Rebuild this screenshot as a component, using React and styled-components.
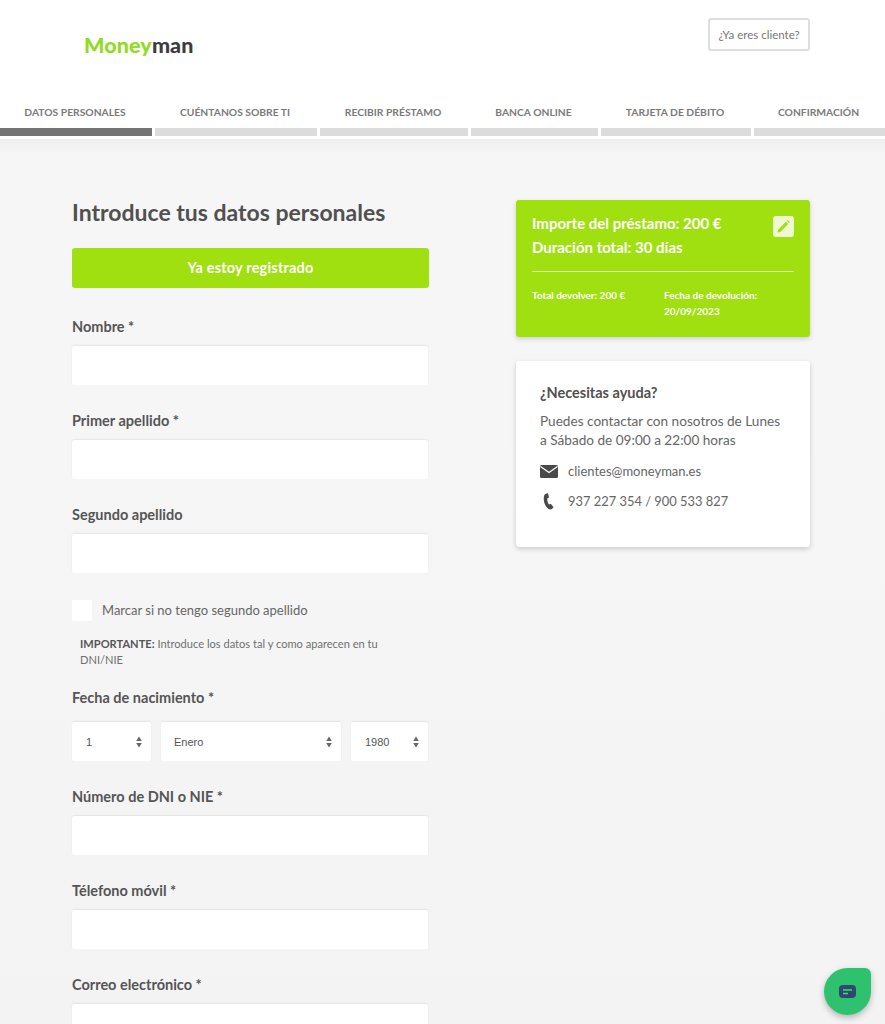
import React from "react";
import styled, { createGlobalStyle } from "styled-components";

const Global = createGlobalStyle`
  html, body {
    margin: 0;
    height: 100%;
    overflow: hidden;
    background: #f4f4f4;
    font-family: "Lato", "Open Sans", sans-serif;
    color: #555;
  }
  * { box-sizing: border-box; }
`;

const Header = styled.header`
  height: 100px;
  background: #fff;
  display: flex;
  justify-content: space-between;
  padding: 18px 75px 0 84px;
`;
const Logo = styled.div`
  margin-top: 15px;
  font-size: 21.5px;
  line-height: 25px;
  font-weight: 900;
  letter-spacing: 0.1px;
  color: #92dc1e;
  span {
    color: #3d3d3d;
  }
`;
const ClientButton = styled.button`
  width: 102px;
  height: 33px;
  background: #fff;
  border: 2px solid #dedede;
  border-radius: 3px;
  font: 400 11.5px "Lato", sans-serif;
  color: #777;
  padding: 0;
`;

const Steps = styled.nav`
  display: flex;
  gap: 3px;
  height: 39px;
  background: #fff;
`;
const Step = styled.div`
  width: ${(p) => p.$w}px;
  display: flex;
  flex-direction: column;
  justify-content: space-between;
  text-align: center;
  font-size: 10.3px;
  line-height: 25px;
  font-weight: 700;
  color: #7a7a7a;
  white-space: nowrap;
  padding: 0 2px 3px 0;
  &::after {
    content: "";
    height: 8px;
    margin-right: -2px;
    background: ${(p) => (p.$active ? "#747474" : "#dcdcdc")};
  }
`;

const Page = styled.main`
  display: flex;
  align-items: flex-start;
  padding: 61px 0 0 72px;
  background: linear-gradient(#efefef, #f6f6f6 14px, #f6f6f6 300px, #f3f3f3);
  height: 900px;
`;
const Form = styled.section`
  width: 357px;
  margin-right: 87px;
`;
const Title = styled.h1`
  margin: 0 0 24px;
  font-size: 23px;
  line-height: 24px;
  font-weight: 700;
  color: #505050;
`;
const GreenButton = styled.button`
  display: block;
  width: 100%;
  height: 40px;
  background: #a0e011;
  border: 0;
  border-radius: 3px;
  color: #fff;
  font: 700 14.5px "Lato", sans-serif;
  letter-spacing: 0.2px;
  padding: 0 0 1px;
`;
const Field = styled.div`
  margin-top: ${(p) => p.$top ?? 25}px;
`;
const Label = styled.label`
  display: block;
  padding-top: 1px;
  font-size: 14.5px;
  line-height: 26px;
  font-weight: 700;
  color: #555;
  margin-bottom: 6px;
`;
const Input = styled.div`
  width: 356px;
  height: 39px;
  background: #fff;
  border-radius: 2px;
  box-shadow: 0 -1px 2px rgba(0, 0, 0, 0.07);
`;
const CheckRow = styled.div`
  display: flex;
  align-items: center;
  gap: 10px;
  margin-top: 27px;
  font-size: 13px;
  color: #666;
`;
const CheckBox = styled.span`
  width: 20px;
  height: 21px;
  background: #fff;
  border-radius: 2px;
`;
const CheckText = styled.span`
  padding-bottom: 2px;
`;
const Notice = styled.p`
  margin: 15px 30px 0 8px;
  font-size: 11.1px;
  line-height: 16px;
  color: #6f6f6f;
  b {
    color: #555;
    font-weight: 700;
  }
`;
const DateRow = styled.div`
  display: flex;
  gap: 10px;
  width: 356px;
  padding-top: 5px;
`;
const Select = styled.div`
  flex: ${(p) => p.$grow};
  height: 39px;
  display: flex;
  align-items: center;
  justify-content: space-between;
  padding: 0 9px 0 ${(p) => p.$pad}px;
  background: #fff;
  border-radius: 2px;
  box-shadow: 0 -1px 2px rgba(0, 0, 0, 0.07);
  font: 400 11px "Liberation Sans", sans-serif;
  color: #555;
`;

const Side = styled.aside`
  width: 294px;
  display: flex;
  flex-direction: column;
  gap: 24px;
`;
const LoanCard = styled.section`
  height: 137px;
  padding: 11px 16px 0;
  background: #a0e011;
  border-radius: 3px;
  box-shadow: 0 2px 5px rgba(0, 0, 0, 0.16);
  color: #fff;
`;
const LoanTop = styled.div`
  display: flex;
  justify-content: space-between;
  height: 61px;
  border-bottom: 1px solid rgba(255, 255, 255, 0.65);
  font-size: 15px;
  line-height: 24px;
  font-weight: 700;
`;
const EditIcon = styled.span`
  width: 21px;
  height: 21px;
  margin-top: 5px;
  display: flex;
  align-items: center;
  justify-content: center;
  background: #eef9d2;
  border-radius: 3px;
`;
const LoanBottom = styled.div`
  display: grid;
  grid-template-columns: 132px 1fr;
  margin-top: 15px;
  font-size: 10px;
  line-height: 16px;
  font-weight: 700;
`;
const HelpCard = styled.section`
  height: 186px;
  padding: 22px 24px 0;
  background: #fff;
  border-radius: 3px;
  box-shadow: 0 2px 5px rgba(0, 0, 0, 0.18);
`;
const HelpTitle = styled.h2`
  margin: 0 0 9px;
  font-size: 14.5px;
  line-height: 20px;
  font-weight: 700;
  color: #505050;
`;
const HelpText = styled.p`
  margin: 0 0 6px;
  font-size: 13.6px;
  line-height: 19px;
  color: #666;
`;
const Contact = styled.div`
  display: flex;
  align-items: center;
  gap: 10px;
  height: 30px;
  font-size: ${(p) => p.$size}px;
  color: #666;
`;
const IconSlot = styled.span`
  width: 18px;
  display: flex;
  justify-content: center;
`;
const ChatBubble = styled.div`
  position: fixed;
  right: 14px;
  bottom: 9px;
  width: 47px;
  height: 47px;
  display: flex;
  align-items: center;
  justify-content: center;
  background: #2fc26e;
  border-radius: 50% 6px 50% 50%;
  box-shadow: 0 3px 6px rgba(0, 0, 0, 0.25);
`;

const steps = [
  ["DATOS PERSONALES", 152, true],
  ["CUÉNTANOS SOBRE TI", 162],
  ["RECIBIR PRÉSTAMO", 148],
  ["BANCA ONLINE", 127],
  ["TARJETA DE DÉBITO", 150],
  ["CONFIRMACIÓN", 131],
];

const Arrows = () => (
  <svg width="6" height="12" viewBox="0 0 6 12" fill="#666">
    <path d="M3 .5 5.800 5H.2zM3 11.500.2 7h5.600z" />
  </svg>
);

const TextField = ({ label, top }) => (
  <Field $top={top}>
    <Label>{label}</Label>
    <Input />
  </Field>
);

export default function App() {
  return (
    <>
      <Global />
      <Header>
        <Logo>
          Money<span>man</span>
        </Logo>
        <ClientButton>¿Ya eres cliente?</ClientButton>
      </Header>
      <Steps>
        {steps.map(([text, w, active]) => (
          <Step key={text} $w={w} $active={active}>
            {text}
          </Step>
        ))}
      </Steps>
      <Page>
        <Form>
          <Title>Introduce tus datos personales</Title>
          <GreenButton>Ya estoy registrado</GreenButton>
          <TextField label="Nombre *" top={25} />
          <TextField label="Primer apellido *" top={22} />
          <TextField label="Segundo apellido" top={22} />
          <CheckRow>
            <CheckBox />
            <CheckText>Marcar si no tengo segundo apellido</CheckText>
          </CheckRow>
          <Notice>
            <b>IMPORTANTE:</b> Introduce los datos tal y como aparecen en tu DNI/NIE
          </Notice>
          <Field $top={16}>
            <Label>Fecha de nacimiento *</Label>
            <DateRow>
              <Select $grow="0 0 79px" $pad={14}>
                1 <Arrows />
              </Select>
              <Select $grow="1" $pad={13}>
                Enero <Arrows />
              </Select>
              <Select $grow="0 0 77px" $pad={14}>
                1980 <Arrows />
              </Select>
            </DateRow>
          </Field>
          <TextField label="Número de DNI o NIE *" top={22} />
          <TextField label="Télefono móvil *" top={22} />
          <TextField label="Correo electrónico *" top={22} />
        </Form>
        <Side>
          <LoanCard>
            <LoanTop>
              <div>
                Importe del préstamo: 200 €
                <br />
                Duración total: 30 días
              </div>
              <EditIcon>
                <svg width="15" height="15" viewBox="0 0 15 15" fill="#a0e011">
                  <path d="M1.500 13.500l.6-2.800 7.900-7.900 2.200 2.200-7.900 7.900zM10.900 1.900l.9-.8 2.100 2.100-.9.9z" />
                </svg>
              </EditIcon>
            </LoanTop>
            <LoanBottom>
              <div>Total devolver: 200 €</div>
              <div>
                Fecha de devolución:
                <br />
                20/09/2023
              </div>
            </LoanBottom>
          </LoanCard>
          <HelpCard>
            <HelpTitle>¿Necesitas ayuda?</HelpTitle>
            <HelpText>
              Puedes contactar con nosotros de Lunes a Sábado de 09:00 a 22:00 horas
            </HelpText>
            <Contact $size={13}>
              <IconSlot>
                <svg width="18" height="13" viewBox="0 0 18 13">
                  <rect width="18" height="13" rx="1.500" fill="#4a4a4a" />
                  <path d="M.5 1.500 9 7.500l8.500-6" fill="none" stroke="#fff" strokeWidth="1.200" />
                </svg>
              </IconSlot>
              clientes@moneyman.es
            </Contact>
            <Contact $size={12.9}>
              <IconSlot>
                <svg width="12" height="17" viewBox="0 0 12 17" fill="#4a4a4a">
                  <path d="M3.200.5 5 .2l1 4.300-1.700.9c-.2 2 .4 4.300 1.700 6l1.700-.6 2.900 3.500-1.400 1.500C7.500 17 5.800 16.400 4.400 15 1.200 11.800.2 6.500 1 3.200 1.300 1.800 2 .9 3.200.5z" />
                </svg>
              </IconSlot>
              937 227 354 / 900 533 827
            </Contact>
          </HelpCard>
        </Side>
      </Page>
      <ChatBubble>
        <svg width="17" height="14" viewBox="0 0 17 14">
          <rect width="17" height="13" rx="4" fill="#2c4a6b" />
          <path d="M4 5h9M4 8.500h5" stroke="#4fd08f" strokeWidth="1.300" />
        </svg>
      </ChatBubble>
    </>
  );
}
